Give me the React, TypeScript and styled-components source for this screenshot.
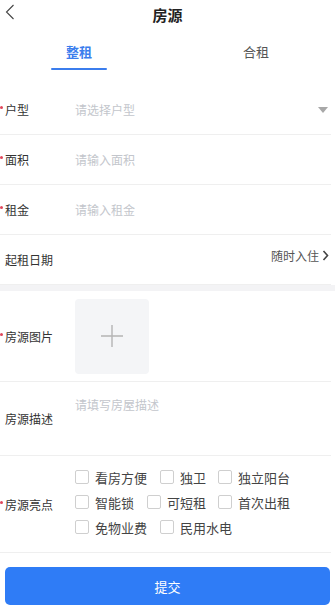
import React from "react";
import styled, { createGlobalStyle } from "styled-components";

const Global = createGlobalStyle`
  html, body { margin: 0; padding: 0; background: #fff; }
  body { font-family: "Noto Sans CJK SC", "Noto Sans", sans-serif; color: #333; }
  * { box-sizing: border-box; }
`;

const Page = styled.div`
  width: 335px;
  display: flex;
  flex-direction: column;
  background: #fff;
`;

const Header = styled.div`
  height: 30px;
  display: flex;
  align-items: center;
  justify-content: center;
  position: relative;
`;

const Back = styled.div`
  position: absolute;
  left: 2px;
  top: 3px;
  width: 16px;
  height: 18px;
  display: flex;
  align-items: center;
  justify-content: center;
`;

const Title = styled.div`
  font-size: 15px;
  font-weight: 700;
  color: #222;
  margin-top: -1px;
`;

const Tabs = styled.div`
  display: flex;
  justify-content: center;
  gap: 121px;
  height: 55px;
`;

const Tab = styled.div<{ $active?: boolean }>`
  width: 56px;
  display: flex;
  flex-direction: column;
  align-items: center;
  padding-top: 12px;
  font-size: 13px;
  color: ${(p) => (p.$active ? "#3b7ded" : "#555")};
  font-weight: ${(p) => (p.$active ? 600 : 400)};
  &::after {
    content: "";
    width: 56px;
    height: 2px;
    margin-top: 7px;
    border-radius: 1px;
    background: ${(p) => (p.$active ? "#3b7ded" : "transparent")};
  }
`;

const Row = styled.div<{ $h: number; $top?: boolean }>`
  height: ${(p) => p.$h}px;
  display: flex;
  align-items: ${(p) => (p.$top ? "flex-start" : "center")};
  margin: 0 4px 0 0;
  border-bottom: 1px solid #efefef;
`;

const LabelBox = styled.div`
  width: 75px;
  flex: none;
  display: flex;
  align-items: center;
  align-self: center;
  font-size: 12px;
  color: #333;
  position: relative;
  padding-left: 5px;
`;

const Dot = styled.span`
  position: absolute;
  left: 0px;
  top: 5px;
  width: 3px;
  height: 3px;
  border-radius: 50%;
  background: #e0465a;
`;

const Placeholder = styled.div<{ $top?: number }>`
  flex: 1;
  font-size: 12px;
  color: #c3c6cc;
  align-self: ${(p) => (p.$top !== undefined ? "flex-start" : "center")};
  margin-top: ${(p) => (p.$top !== undefined ? p.$top : 0)}px;
`;

const Caret = styled.div`
  width: 0;
  height: 0;
  border-left: 5px solid transparent;
  border-right: 5px solid transparent;
  border-top: 6px solid #a8a8a8;
  margin-right: 3px;
`;

const Value = styled.div`
  margin-left: auto;
  display: flex;
  align-items: center;
  gap: 3px;
  font-size: 12px;
  color: #555;
  margin-top: -8px;
  margin-right: 2px;
`;

const Band = styled.div`
  height: 6px;
  background: #f3f3f5;
`;

const Upload = styled.div`
  width: 74px;
  height: 75px;
  background: #f4f5f7;
  border-radius: 4px;
  display: flex;
  align-items: center;
  justify-content: center;
`;

const Checks = styled.div`
  display: flex;
  flex-wrap: wrap;
  width: 240px;
  row-gap: 11px;
  column-gap: 0;
  align-self: center;
  margin-top: -4px;
`;

const Check = styled.label<{ $w: number }>`
  width: ${(p) => p.$w}px;
  display: flex;
  align-items: center;
  gap: 6px;
  font-size: 13px;
  color: #444;
  height: 14px;
  white-space: nowrap;
`;

const Box = styled.span`
  width: 14px;
  height: 14px;
  border: 1px solid #cfcfcf;
  border-radius: 2px;
  flex: none;
`;

const Footer = styled.div`
  padding: 14px 5px 9px;
`;

const Submit = styled.button`
  width: 100%;
  height: 38px;
  border: none;
  border-radius: 5px;
  background: #2f7cf6;
  color: #fff;
  font-size: 13px;
  font-family: inherit;
`;

const checks: [string, number][] = [
  ["看房方便", 85],
  ["独卫", 58],
  ["独立阳台", 90],
  ["智能锁", 72],
  ["可短租", 71],
  ["首次出租", 90],
  ["免物业费", 85],
  ["民用水电", 90],
];

export default function App() {
  return (
    <Page>
      <Global />
      <Header>
        <Back>
          <svg width="10" height="16" viewBox="0 0 10 16">
            <path d="M8.5 1 L1.5 8 L8.5 15" fill="none" stroke="#444" strokeWidth="1.1" />
          </svg>
        </Back>
        <Title>房源</Title>
      </Header>
      <Tabs>
        <Tab $active>整租</Tab>
        <Tab>合租</Tab>
      </Tabs>
      <Row $h={50}>
        <LabelBox><Dot />户型</LabelBox>
        <Placeholder>请选择户型</Placeholder>
        <Caret />
      </Row>
      <Row $h={50}>
        <LabelBox><Dot />面积</LabelBox>
        <Placeholder>请输入面积</Placeholder>
      </Row>
      <Row $h={50}>
        <LabelBox><Dot />租金</LabelBox>
        <Placeholder>请输入租金</Placeholder>
      </Row>
      <Row $h={50}>
        <LabelBox>起租日期</LabelBox>
        <Value>
          随时入住
          <svg width="7" height="11" viewBox="0 0 7 11">
            <path d="M1.5 1 L5.5 5.5 L1.5 10" fill="none" stroke="#444" strokeWidth="1.6" />
          </svg>
        </Value>
      </Row>
      <Band />
      <Row $h={91}>
        <LabelBox><Dot />房源图片</LabelBox>
        <Upload>
          <svg width="24" height="24" viewBox="0 0 24 24">
            <path d="M12 1 V23 M1 12 H23" stroke="#b4b4b4" strokeWidth="1.4" />
          </svg>
        </Upload>
      </Row>
      <Row $h={74} $top>
        <LabelBox>房源描述</LabelBox>
        <Placeholder $top={14}>请填写房屋描述</Placeholder>
      </Row>
      <Row $h={97}>
        <LabelBox><Dot />房源亮点</LabelBox>
        <Checks>
          {checks.map(([t, w]) => (
            <Check key={t} $w={w}>
              <Box />
              {t}
            </Check>
          ))}
        </Checks>
      </Row>
      <Footer>
        <Submit>提交</Submit>
      </Footer>
    </Page>
  );
}
